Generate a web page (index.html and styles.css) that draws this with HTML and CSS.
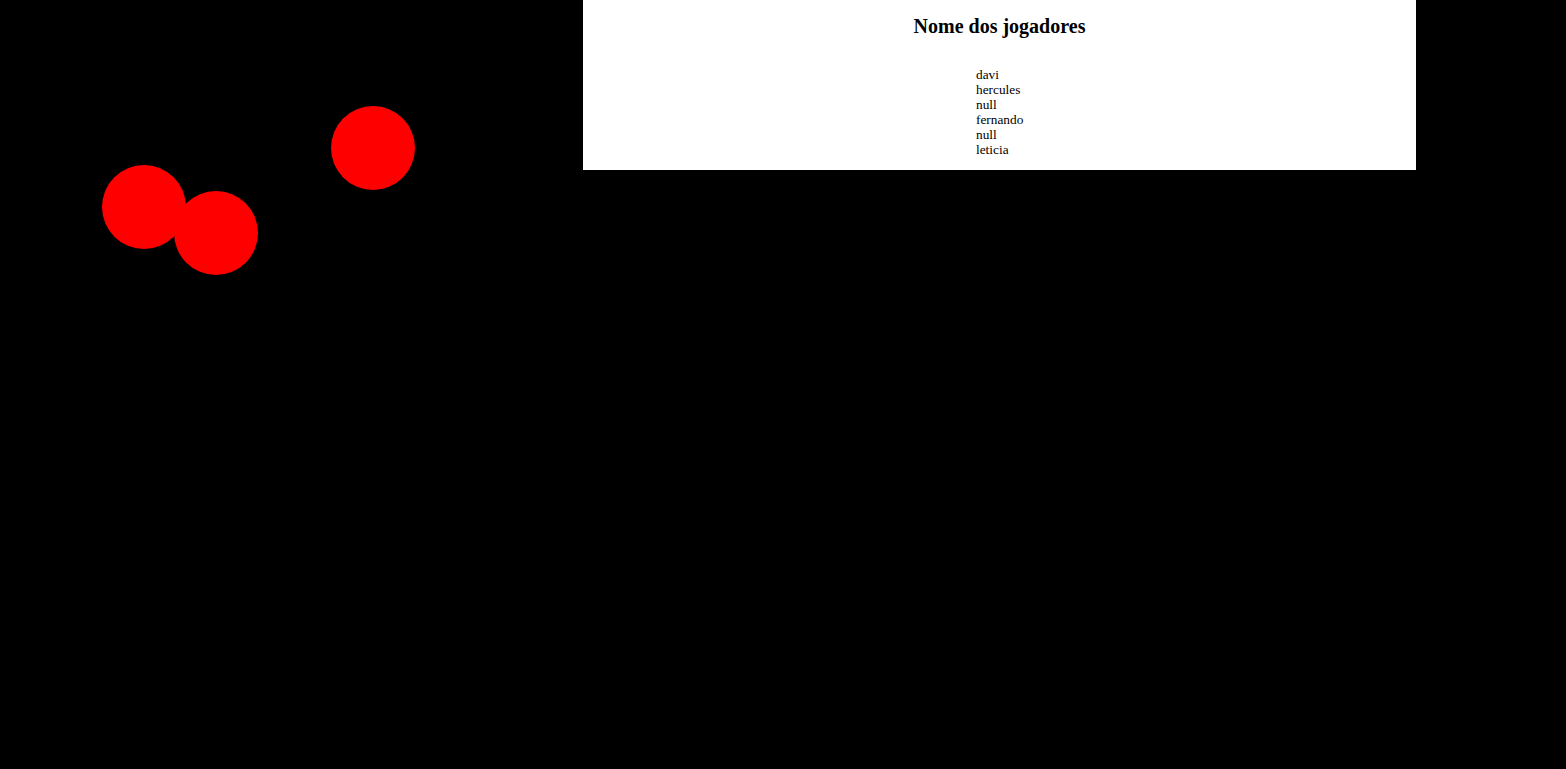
FILE: index.html
```html
<!DOCTYPE html>
<html lang="pt">
<head>
<meta charset="utf-8">
<title>Jogo</title>
<link rel="stylesheet" href="styles.css">
</head>
<body>
<div class="page">
  <div class="arena">
    <div class="ball" style="left:102px;top:165px"></div>
    <div class="ball" style="left:174px;top:191px"></div>
    <div class="ball" style="left:331px;top:106px"></div>
  </div>
  <section class="panel">
    <h2 class="title">Nome dos jogadores</h2>
    <ul class="players">
      <li>davi</li>
      <li>hercules</li>
      <li>null</li>
      <li>fernando</li>
      <li>null</li>
      <li>leticia</li>
    </ul>
  </section>
</div>
</body>
</html>
```

FILE: styles.css
```css
html, body {
  margin: 0;
  padding: 0;
  background: #000;
  height: 100%;
}
body {
  font-family: "Liberation Serif", "Times New Roman", serif;
  font-size: 13.33px;
  color: #000;
  overflow: hidden;
}
.page {
  display: grid;
  grid-template-columns: 583px 833px;
  align-items: start;
}
.arena {
  position: relative;
  height: 769px;
}
.ball {
  position: absolute;
  width: 84px;
  height: 84px;
  border-radius: 50%;
  background: #ff0000;
}
.panel {
  background: #fff;
  padding: 0 0 13px 0;
  display: flex;
  flex-direction: column;
}
.title {
  margin: 15px 0 0 0;
  font-size: 20px;
  line-height: 23px;
  font-weight: bold;
  text-align: center;
}
.players {
  list-style: none;
  margin: 29px 0 0 0;
  padding: 0 0 0 393px;
  line-height: 15px;
}
```
